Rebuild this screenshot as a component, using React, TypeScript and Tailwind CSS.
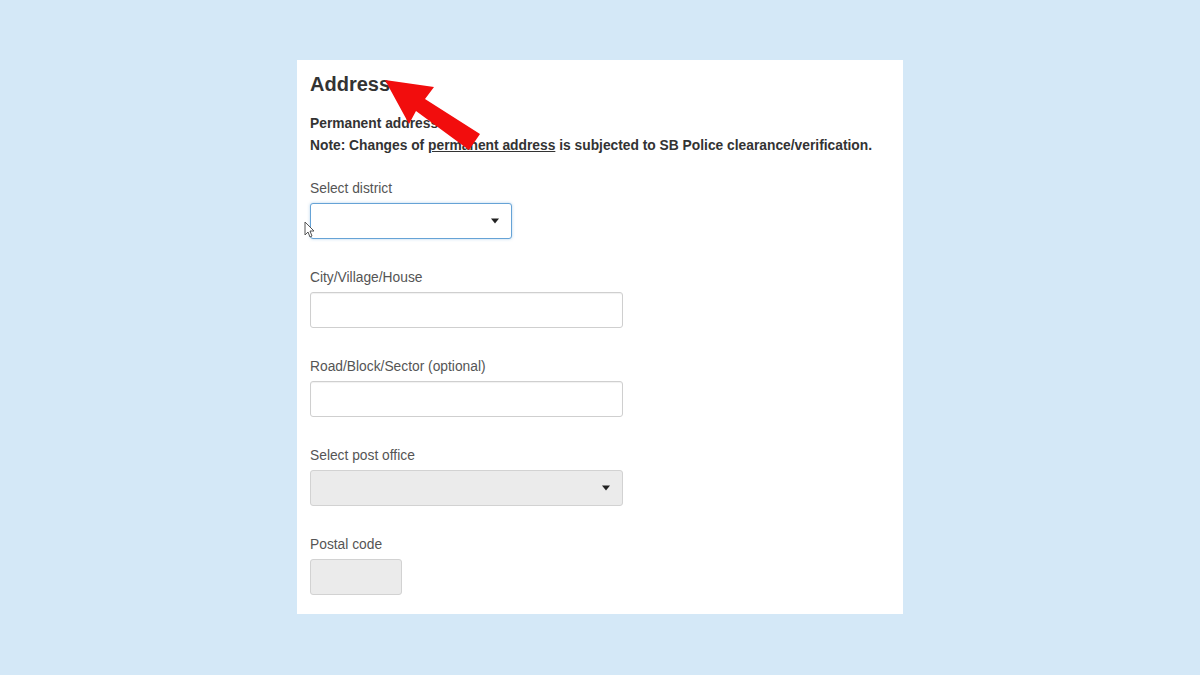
const Caret = () => (
  <span className="absolute right-[12px] top-1/2 -translate-y-1/2 h-0 w-0 border-x-[4px] border-t-[5px] border-x-transparent border-t-[#222]" />
);

const Field = ({
  label,
  children,
}: {
  label: string;
  children: React.ReactNode;
}) => (
  <div className="flex flex-col">
    <label className="mb-[5px] text-[13.8px] leading-[18px] text-[#555]">
      {label}
    </label>
    {children}
  </div>
);

export default function App() {
  return (
    <div
      className="flex h-[675px] w-[1200px] justify-center bg-[#d4e8f7] pt-[60px]"
      style={{ fontFamily: '"Liberation Sans", Arial, sans-serif' }}
    >
      <div className="relative h-[554px] w-[606px] bg-white px-[13px] pt-[10px]">
        <h2 className="text-[20px] font-bold leading-[28px] text-[#333]">
          Address
        </h2>
        <div className="mt-[15px] text-[13.8px] font-bold leading-[22px] text-[#333]">
          <p>Permanent address</p>
          <p>
            Note: Changes of <span className="underline">permanent address</span>{" "}
            is subjected to SB Police clearance/verification.
          </p>
        </div>

        <div className="mt-[23px] flex flex-col gap-[30px]">
          <Field label="Select district">
            <div className="relative h-[36px] w-[202px] rounded-[3px] border border-[#66a3d6] bg-white shadow-[0_0_3px_rgba(102,163,214,0.5)]">
              <Caret />
            </div>
          </Field>
          <Field label="City/Village/House">
            <div className="h-[36px] w-[313px] rounded-[3px] border border-[#cfcfcf] bg-white shadow-[inset_0_1px_1px_rgba(0,0,0,0.06)]" />
          </Field>
          <Field label="Road/Block/Sector (optional)">
            <div className="h-[36px] w-[313px] rounded-[3px] border border-[#cfcfcf] bg-white shadow-[inset_0_1px_1px_rgba(0,0,0,0.06)]" />
          </Field>
          <Field label="Select post office">
            <div className="relative h-[36px] w-[313px] rounded-[3px] border border-[#d2d2d2] bg-[#ebebeb]">
              <Caret />
            </div>
          </Field>
          <Field label="Postal code">
            <div className="h-[36px] w-[92px] rounded-[3px] border border-[#d2d2d2] bg-[#ebebeb]" />
          </Field>
        </div>

        {/* mouse pointer */}
        <svg
          className="absolute left-[7px] top-[161px]"
          width="11"
          height="17"
          viewBox="0 0 11 17"
        >
          <path
            d="M1 1 L1 14 L4 11 L6 16 L8 15 L6 10 L10 10 Z"
            fill="#fff"
            stroke="#555"
            strokeWidth="1"
            strokeLinejoin="round"
          />
        </svg>

        {/* red arrow */}
        <svg
          className="absolute left-0 top-0"
          width="606"
          height="554"
          viewBox="297 60 606 554"
        >
          <polygon
            points="385,80 434,87 425,99 480,134 469,150 416,111 409,124"
            fill="#f20d0d"
          />
        </svg>
      </div>
    </div>
  );
}
